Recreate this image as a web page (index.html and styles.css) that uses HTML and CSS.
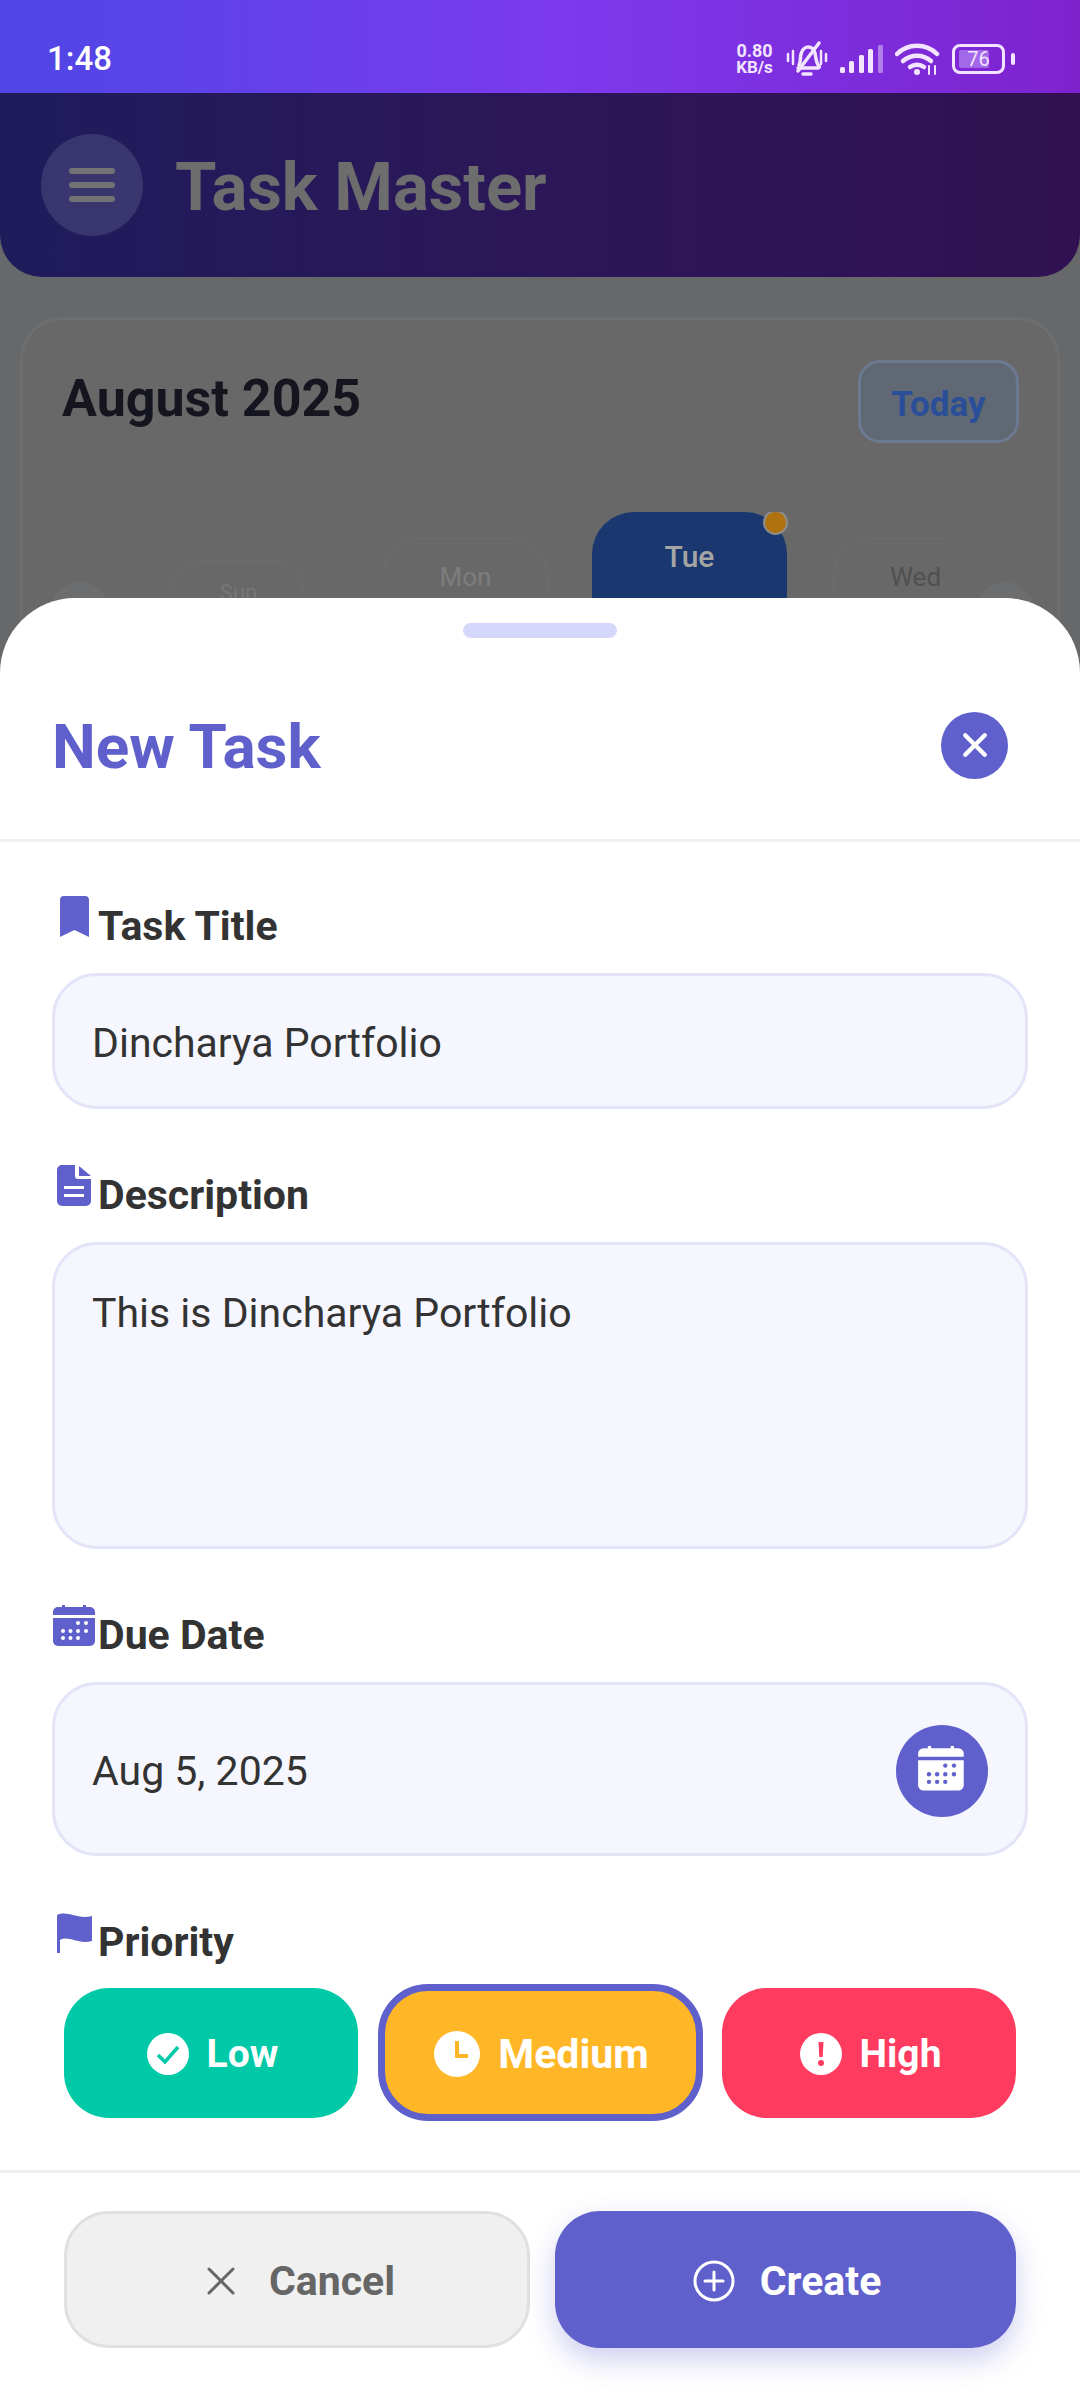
FILE: index.html
```html
<!DOCTYPE html>
<html lang="en">
<head>
    <meta charset="UTF-8">
    <meta name="viewport" content="width=device-width, initial-scale=1.0">
    <title>Task Master</title>
    <link rel="stylesheet" href="styles.css">
</head>
<body>
    <svg class="defs" width="0" height="0">
        <symbol id="ic-calendar" viewBox="0 0 46 46">
            <path d="M10 2V0.5a1.5 1.5 0 0 1 3 0V2h18V0.5a1.5 1.5 0 0 1 3 0V2h4a5 5 0 0 1 5 5v3H1V7a5 5 0 0 1 5-5z"/>
            <path d="M1 13h42v23a5 5 0 0 1-5 5H6a5 5 0 0 1-5-5z"/>
            <g class="cal-dots">
                <circle cx="26" cy="18" r="2"/><circle cx="34" cy="18" r="2"/>
                <circle cx="11" cy="26" r="2"/><circle cx="18.500" cy="26" r="2"/><circle cx="26" cy="26" r="2"/><circle cx="34" cy="26" r="2"/>
                <circle cx="11" cy="33" r="2"/><circle cx="18.500" cy="33" r="2"/><circle cx="26" cy="33" r="2"/>
            </g>
        </symbol>
    </svg>

    <div class="status-bar">
        <span class="clock">1:48</span>
        <div class="status-icons">
            <div class="net-speed"><span>0.80</span><span>KB/s</span></div>
            <svg class="st-bell" viewBox="0 0 42 36" width="42" height="36" fill="none" stroke="currentColor" stroke-width="3.500" stroke-linecap="round" stroke-linejoin="round">
                <path d="M13 24c2-3 1-7 2-11 1-4 4-7 7-7s6 2 7 6c1 5 1 10 4 13 1 1 0 2-1 2H12"/>
                <path d="M17 33h8"/>
                <path d="M12 30L33 2"/>
                <path d="M2 13v7M7 10v13M35 10v13M40 13v7" stroke-width="2.500"/>
            </svg>
            <svg class="st-signal" viewBox="0 0 44 28" width="44" height="28" fill="currentColor">
                <rect x="0" y="22" width="5" height="6" rx="1.500"/>
                <rect x="9" y="16" width="5" height="12" rx="1.500"/>
                <rect x="19" y="10" width="5" height="18" rx="1.500"/>
                <rect x="28" y="4" width="5" height="24" rx="1.500"/>
                <rect class="bar-off" x="38" y="0" width="5" height="28" rx="1"/>
            </svg>
            <svg class="st-wifi" viewBox="0 0 45 32" width="45" height="32" fill="none" stroke="currentColor" stroke-width="4.500" stroke-linecap="round">
                <path d="M2 11C13 0 31 0 42 11"/>
                <path d="M8 18c8-7 20-7 28 0"/>
                <path d="M15 24c4-3 10-3 14 0"/>
                <circle cx="22" cy="29" r="3" fill="currentColor" stroke="none"/>
                <path d="M34 23v8M40 23v8" stroke-width="2"/>
            </svg>
            <div class="battery"><span class="battery-fill"></span><span class="battery-num">76</span></div>
        </div>
    </div>

    <div class="page">
        <header class="app-header">
            <div class="menu-btn"><span></span><span></span><span></span></div>
            <h1>Task Master</h1>
        </header>

        <section class="calendar">
            <div class="cal-top">
                <h2>August 2025</h2>
                <div class="today-btn">Today</div>
            </div>
            <div class="cal-row">
                <div class="cal-arrow"></div>
                <div class="day-strip">
                    <div class="day day-far">Sun</div>
                    <div class="day day-near">Mon</div>
                    <div class="day day-active">Tue<i class="day-dot"></i></div>
                    <div class="day day-near day-wed">Wed</div>
                </div>
                <div class="cal-arrow"></div>
            </div>
        </section>

        <div class="sheet">
            <div class="handle"></div>
            <div class="sheet-head">
                <h3>New Task</h3>
                <div class="close-btn">
                    <svg viewBox="0 0 24 24" width="26" height="26" fill="none" stroke="#fff" stroke-width="4" stroke-linecap="round"><path d="M3 3l18 18M21 3L3 21"/></svg>
                </div>
            </div>

            <div class="sheet-body">
                <div class="field">
                    <div class="label">
                        <svg class="label-icon" viewBox="0 0 46 46"><path d="M12 0h21a4 4 0 0 1 4 4v37l-14.500-7L8 41V4a4 4 0 0 1 4-4z"/></svg>
                        <span>Task Title</span>
                    </div>
                    <div class="input">Dincharya Portfolio</div>
                </div>

                <div class="field">
                    <div class="label">
                        <svg class="label-icon" viewBox="0 0 46 46"><path fill-rule="evenodd" d="M10 0h13v11a3 3 0 0 0 3 3h13v22a5 5 0 0 1-5 5H10a5 5 0 0 1-5-5V5a5 5 0 0 1 5-5zm17 1l12 10H27zM12 21v3h20v-3zm0 8v3h20v-3z"/></svg>
                        <span>Description</span>
                    </div>
                    <div class="input input-area">This is Dincharya Portfolio</div>
                </div>

                <div class="field">
                    <div class="label">
                        <svg class="label-icon label-cal"><use href="#ic-calendar"/></svg>
                        <span>Due Date</span>
                    </div>
                    <div class="input input-date">
                        <span>Aug 5, 2025</span>
                        <div class="date-btn"><svg><use href="#ic-calendar"/></svg></div>
                    </div>
                </div>

                <div class="field field-priority">
                    <div class="label">
                        <svg class="label-icon" viewBox="0 0 46 46"><path d="M5 3c11-5 20 5 35 1v25c-14 4-23-6-32-1v13H5z"/></svg>
                        <span>Priority</span>
                    </div>
                    <div class="priority-row">
                        <div class="prio prio-low">
                            <svg viewBox="0 0 42 42" width="42" height="42"><circle cx="21" cy="21" r="21" fill="#fff"/><path d="M11 22l7 7 13-15" fill="none" stroke="#00c9a7" stroke-width="3.500"/></svg>
                            Low
                        </div>
                        <div class="prio prio-med">
                            <svg viewBox="0 0 46 46" width="46" height="46"><circle cx="23" cy="23" r="23" fill="#fff"/><path d="M23 10v15h11" fill="none" stroke="#ffb627" stroke-width="4"/></svg>
                            Medium
                        </div>
                        <div class="prio prio-high">
                            <svg viewBox="0 0 42 42" width="42" height="42"><circle cx="21" cy="21" r="21" fill="#fff"/><path d="M18.500 9h5l-.8 15h-3.400z" fill="#ff3b5f"/><circle cx="21" cy="30" r="3" fill="#ff3b5f"/></svg>
                            High
                        </div>
                    </div>
                </div>
            </div>

            <div class="sheet-foot">
                <div class="btn btn-cancel">
                    <svg viewBox="0 0 28 28" width="28" height="28" fill="none" stroke="#666" stroke-width="3" stroke-linecap="round"><path d="M2 2l24 24M26 2L2 26"/></svg>
                    Cancel
                </div>
                <div class="btn btn-create">
                    <svg viewBox="0 0 42 42" width="42" height="42" fill="none" stroke="#fff" stroke-width="3" stroke-linecap="round"><circle cx="21" cy="21" r="19"/><path d="M21 12v18M12 21h18"/></svg>
                    Create
                </div>
            </div>
        </div>
    </div>
</body>
</html>
```

FILE: styles.css
```css
* { box-sizing: border-box; }
html, body { margin: 0; padding: 0; }
body { width: 1080px; height: 2400px; overflow: hidden; font-family: Roboto, "Noto Sans", sans-serif; background: #666869; }
.defs { position: absolute; }

/* status bar */
.status-bar { height: 93px; padding: 24px 65px 0 47px; display: flex; align-items: center; justify-content: space-between; color: #fff; background: linear-gradient(90deg, #4f46e5 0%, #7c3aed 52%, #7e22ce 100%); }
.clock { font-size: 33px; font-weight: 500; }
.status-icons { display: flex; align-items: center; color: #f3e4ff; }
.net-speed { width: 41px; margin-right: 11px; display: flex; flex-direction: column; align-items: center; font-size: 18px; font-weight: 700; line-height: 17px; }
.net-speed span:last-child { font-size: 17px; }
.st-bell { margin-right: 12px; }
.st-signal { margin-right: 11px; }
.st-wifi { margin-right: 12px; }
.bar-off { opacity: .45; }
.battery { position: relative; width: 53px; height: 30px; border: 3px solid #f3e4ff; border-radius: 8px; margin-right: 10px; display: flex; align-items: center; justify-content: center; }
.battery::after { content: ""; position: absolute; right: -13px; top: 6px; width: 4px; height: 12px; border-radius: 2px; background: #f3e4ff; }
.battery-fill { position: absolute; left: 4px; top: 3px; bottom: 3px; width: 30px; border-radius: 2px; background: #a368ea; }
.battery-num { position: relative; font-size: 20px; line-height: 20px; color: #f3e4ff; }

/* dimmed page behind the sheet */
.page { position: relative; height: 2307px; }
.app-header { height: 184px; padding-left: 41px; display: flex; align-items: center; border-radius: 0 0 42px 42px; background: linear-gradient(90deg, #1f1c5c 0%, #2c1758 50%, #311152 100%); }
.menu-btn { width: 102px; height: 102px; border-radius: 50%; background: #39356f; display: flex; flex-direction: column; align-items: center; justify-content: center; gap: 8px; }
.menu-btn span { width: 46px; height: 6px; border-radius: 3px; background: #737373; }
.app-header h1 { margin: 4px 0 0 32px; font-size: 67px; font-weight: 700; color: #6d6d6d; }

.calendar { margin: 40px 20px 0; height: 700px; padding-top: 40px; border: 3px solid #6d6e6f; border-bottom: 0; border-radius: 42px 42px 0 0; background: #686868; }
.cal-top { height: 83px; padding: 0 38px 0 39px; display: flex; align-items: center; justify-content: space-between; }
.cal-top h2 { margin: 0 0 6px; font-size: 52px; font-weight: 700; color: #15151f; }
.today-btn { width: 161px; height: 83px; padding-top: 5px; display: flex; align-items: center; justify-content: center; border: 3px solid #6b7a90; border-radius: 22px; background: #5f6873; font-size: 35px; font-weight: 700; color: #2a4e98; }
.cal-row { margin-top: 69px; padding-left: 27px; height: 200px; display: flex; align-items: center; }
.cal-arrow { width: 60px; height: 60px; border-radius: 50%; background: #6c6d6e; flex-shrink: 0; }
.day-strip { width: 776px; height: 200px; margin: 0 27px 0 62px; flex-shrink: 0; display: flex; align-items: center; overflow: hidden; }
.day { position: relative; flex-shrink: 0; text-align: center; border: 2px solid #6b6b6b; }
.day-far { width: 133px; height: 104px; padding-top: 18px; border-radius: 32px; font-size: 22px; color: #777; margin-right: 78px; }
.day-near { width: 165px; height: 148px; padding-top: 22px; border-radius: 36px; font-size: 26px; color: #7d7d7d; margin-right: 44px; }
.day-wed { margin-right: 0; color: #505050; }
.day-active { width: 195px; height: 200px; padding-top: 27px; border: 0; border-radius: 42px; font-size: 30px; font-weight: 500; color: #a5a5a5; background: #1a386f; margin-right: 46px; }
.day-dot { position: absolute; right: 1px; top: 0; width: 21px; height: 21px; border-radius: 50%; background: #b0720f; box-shadow: 0 0 0 2px #8d8d8d; }

/* bottom sheet */
.sheet { position: absolute; left: 0; right: 0; top: 505px; bottom: 0; background: #fff; border-radius: 75px 75px 0 0; display: flex; flex-direction: column; }
.handle { width: 154px; height: 15px; margin: 25px auto 0; border-radius: 8px; background: #d5d8fb; }
.sheet-head { height: 204px; padding: 16px 72px 0 52px; display: flex; align-items: center; justify-content: space-between; border-bottom: 3px solid #f0f0f2; }
.sheet-head h3 { margin: 0; font-size: 62px; font-weight: 700; color: #5f60cc; }
.close-btn { width: 67px; height: 67px; margin-bottom: 3px; border-radius: 50%; background: #5f60cc; display: flex; align-items: center; justify-content: center; }

.sheet-body { flex: 1; padding: 54px 52px 0; }
.field { margin-bottom: 56px; }
.label { height: 54px; margin-bottom: 23px; display: flex; align-items: flex-end; font-size: 41px; line-height: 47px; font-weight: 700; color: #333; }
.label-icon { width: 46px; height: 46px; align-self: flex-start; fill: #5f60cc; --dots: #fff; }
.input { height: 136px; padding: 3px 37px 0; display: flex; align-items: center; border: 3px solid #e3e4f8; border-radius: 45px; background: #f6f7fe; font-size: 41px; color: #333; }
.input-area { height: 307px; padding-top: 44px; align-items: flex-start; }
.input-date { height: 174px; justify-content: space-between; }
.date-btn { width: 92px; height: 92px; border-radius: 50%; background: #5f60cc; display: flex; align-items: center; justify-content: center; }
.date-btn svg { width: 50px; height: 50px; fill: #fff; --dots: #5f60cc; }
.cal-dots { fill: var(--dots); }

.field-priority { margin-bottom: 0; }
.field-priority .label { margin-bottom: 18px; }
.priority-row { padding: 0 12px; display: flex; align-items: center; justify-content: space-between; }
.prio { width: 294px; height: 130px; padding-top: 2px; border-radius: 45px; display: flex; align-items: center; justify-content: center; gap: 18px; font-size: 39px; font-weight: 700; color: #fff; }
.prio-low { padding-left: 3px; background: #00c9a7; }
.prio-med { width: 325px; height: 137px; padding-left: 3px; border: 7px solid #5f60cc; border-radius: 50px; background: #ffb627; font-size: 41px; }
.prio-high { padding-left: 3px; background: #ff3b5f; }

.sheet-foot { height: 230px; padding: 38px 64px 0; display: flex; align-items: flex-start; justify-content: space-between; border-top: 3px solid #f0f0f2; }
.btn { height: 137px; padding-top: 2px; border-radius: 45px; display: flex; align-items: center; justify-content: center; font-size: 41px; font-weight: 700; }
.btn-cancel { width: 466px; padding-left: 8px; gap: 34px; border: 3px solid #e0e0e0; background: #f0f0f0; color: #666; }
.btn-create { width: 461px; padding-left: 3px; gap: 25px; background: #5f60cc; color: #fff; box-shadow: 0 12px 28px rgba(95, 96, 204, .3); }
```
